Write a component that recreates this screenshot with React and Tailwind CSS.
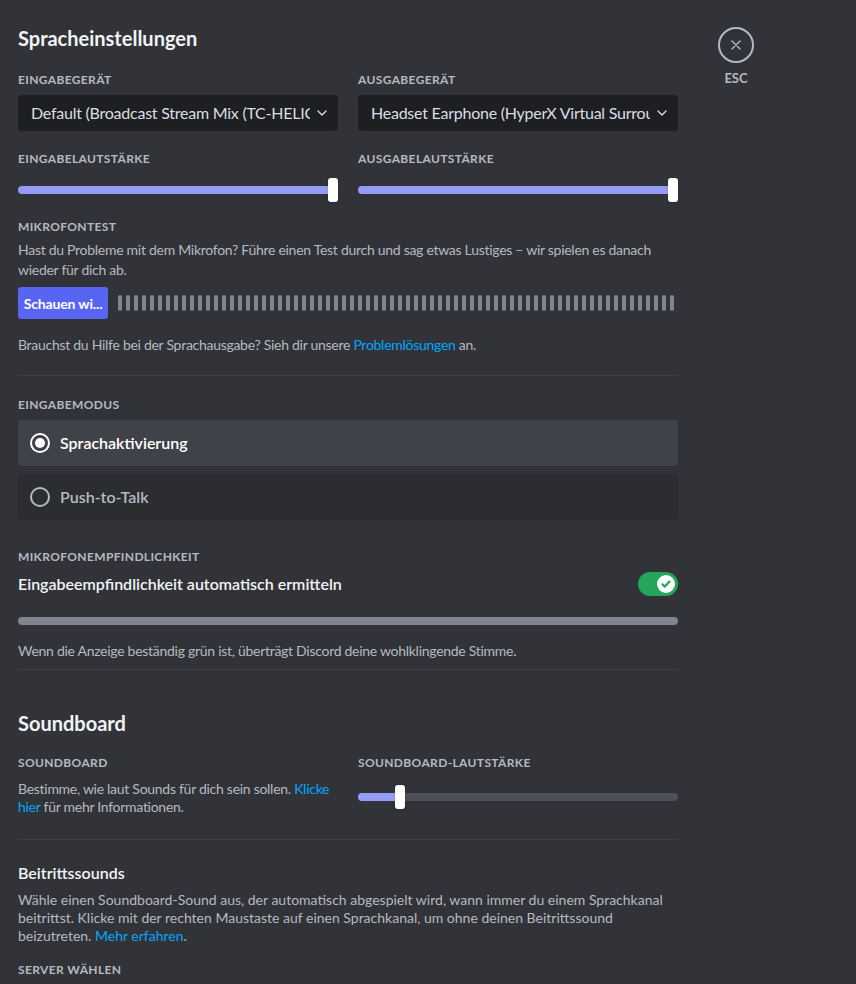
import React from "react";

const font = { fontFamily: 'Lato, "Noto Sans", sans-serif' };

function Heading({ children, className = "" }) {
  return (
    <div className={`text-[12px] leading-4 font-bold uppercase tracking-[0.03em] text-[#b5bac1] ${className}`}>
      {children}
    </div>
  );
}

function Chevron() {
  return (
    <svg width="16" height="16" viewBox="0 0 24 24" fill="none" stroke="#dbdee1" strokeWidth="2" strokeLinecap="round" strokeLinejoin="round">
      <path d="M6 9l6 6 6-6" />
    </svg>
  );
}

function Select({ text }) {
  return (
    <div className="h-9 rounded bg-[#1e1f22] flex items-center pl-[13px] pr-2 gap-1">
      <span className="flex-1 min-w-0 whitespace-nowrap overflow-hidden text-[16px] tracking-[-0.015em] text-[#dbdee1]">{text}</span>
      <Chevron />
    </div>
  );
}

function Slider({ pct }) {
  return (
    <div className="relative h-6 flex items-center">
      <div className="w-full h-2 rounded-full bg-[#4e5058] overflow-hidden">
        <div className="h-full bg-[#949cf7]" style={{ width: `${pct}%` }} />
      </div>
      <div
        className="absolute top-0 h-6 w-[10px] rounded-[3px] bg-white shadow"
        style={{ left: `calc(${pct}% - ${pct >= 100 ? 10 : 5}px)` }}
      />
    </div>
  );
}

function Radio({ selected, label }) {
  return (
    <div className={`h-[46px] rounded flex items-center px-[10px] gap-2 ${selected ? "bg-[#404249]" : "bg-[#2b2d31]"}`}>
      {selected ? (
        <svg width="24" height="24" viewBox="0 0 24 24">
          <circle cx="12" cy="12" r="9" fill="none" stroke="#fff" strokeWidth="2" />
          <circle cx="12" cy="12" r="5" fill="#fff" />
        </svg>
      ) : (
        <svg width="24" height="24" viewBox="0 0 24 24">
          <circle cx="12" cy="12" r="9" fill="none" stroke="#b5bac1" strokeWidth="2" />
        </svg>
      )}
      <span className={`text-[16px] font-semibold ${selected ? "text-white" : "text-[#b5bac1]"}`}>{label}</span>
    </div>
  );
}

export default function App() {
  const bars = Array.from({ length: 70 });
  return (
    <div className="w-[856px] h-[984px] overflow-hidden bg-[#313338] flex" style={font}>
      <div className="w-[660px] ml-[18px] pt-[26px]">
        <h1 className="text-[20px] leading-6 font-bold text-[#f2f3f5]">Spracheinstellungen</h1>

        <div className="grid grid-cols-2 gap-x-5 mt-[22px]">
          <div>
            <Heading>Eingabegerät</Heading>
            <div className="mt-[7px]"><Select text="Default (Broadcast Stream Mix (TC-HELICON GoXLR))" /></div>
          </div>
          <div>
            <Heading>Ausgabegerät</Heading>
            <div className="mt-[7px]"><Select text="Headset Earphone (HyperX Virtual Surround Sound)" /></div>
          </div>
          <div className="mt-[20px]">
            <Heading>Eingabelautstärke</Heading>
            <div className="mt-[11px]"><Slider pct={100} /></div>
          </div>
          <div className="mt-[20px]">
            <Heading>Ausgabelautstärke</Heading>
            <div className="mt-[11px]"><Slider pct={100} /></div>
          </div>
        </div>

        <Heading className="mt-[17px]">Mikrofontest</Heading>
        <p className="mt-[5px] text-[14px] leading-5 tracking-[-0.02em] text-[#b5bac1]">
          Hast du Probleme mit dem Mikrofon? Führe einen Test durch und sag etwas Lustiges – wir spielen es danach wieder für dich ab.
        </p>
        <div className="mt-[7px] flex items-center gap-[10px]">
          <button className="h-8 w-[90px] rounded-[3px] bg-[#5865f2] text-white text-[14px] tracking-[-0.01em] font-bold px-1 whitespace-nowrap overflow-hidden">
            Schauen wi...
          </button>
          <div className="flex-1 flex justify-between items-center pr-[4px]">
            {bars.map((_, i) => (
              <div key={i} className="w-1 h-4 rounded-full bg-[#80848e]" />
            ))}
          </div>
        </div>
        <p className="mt-[16px] text-[14px] leading-5 tracking-[-0.02em] text-[#b5bac1]">
          Brauchst du Hilfe bei der Sprachausgabe? Sieh dir unsere <span className="text-[#00a8fc]">Problemlösungen</span> an.
        </p>
        <div className="mt-[20px] h-px bg-[#3f4147]" />

        <Heading className="mt-[21px]">Eingabemodus</Heading>
        <div className="mt-[7px] flex flex-col gap-2">
          <Radio selected label="Sprachaktivierung" />
          <Radio label="Push-to-Talk" />
        </div>

        <Heading className="mt-[29px]">Mikrofonempfindlichkeit</Heading>
        <div className="mt-[7px] flex items-center justify-between">
          <span className="text-[16px] font-semibold text-[#f2f3f5]">Eingabeempfindlichkeit automatisch ermitteln</span>
          <div className="w-10 h-6 rounded-full bg-[#23a55a] flex items-center justify-end pr-[3px]">
            <div className="w-[18px] h-[18px] rounded-full bg-white flex items-center justify-center">
              <svg width="12" height="12" viewBox="0 0 12 12" fill="none" stroke="#23a55a" strokeWidth="2.2" strokeLinecap="round" strokeLinejoin="round">
                <path d="M2.5 6.3l2.3 2.3L9.5 3.6" />
              </svg>
            </div>
          </div>
        </div>
        <div className="mt-[21px] h-2 rounded-full bg-[#80848e]" />
        <p className="mt-[16px] text-[14px] leading-5 tracking-[-0.02em] text-[#b5bac1]">
          Wenn die Anzeige beständig grün ist, überträgt Discord deine wohlklingende Stimme.
        </p>
        <div className="mt-[8px] h-px bg-[#3f4147]" />

        <h2 className="mt-[41px] text-[20px] leading-6 font-bold text-[#f2f3f5]">Soundboard</h2>
        <div className="grid grid-cols-2 gap-x-5 mt-[20px]">
          <div>
            <Heading>Soundboard</Heading>
            <p className="mt-[9px] text-[14px] leading-[18px] tracking-[-0.02em] text-[#b5bac1]">
              Bestimme, wie laut Sounds für dich sein sollen. <span className="text-[#00a8fc]">Klicke hier</span> für mehr Informationen.
            </p>
          </div>
          <div>
            <Heading>Soundboard-Lautstärke</Heading>
            <div className="mt-[14px]"><Slider pct={13} /></div>
          </div>
        </div>
        <div className="mt-[23px] h-px bg-[#3f4147]" />

        <h3 className="mt-[23px] text-[16px] leading-5 font-semibold text-[#f2f3f5]">Beitrittssounds</h3>
        <p className="mt-[8px] text-[14px] leading-[18px] text-[#b5bac1]">
          Wähle einen Soundboard-Sound aus, der automatisch abgespielt wird, wann immer du einem Sprachkanal beitrittst. Klicke mit der rechten Maustaste auf einen Sprachkanal, um ohne deinen Beitrittssound beizutreten. <span className="text-[#00a8fc]">Mehr erfahren</span>.
        </p>
        <Heading className="mt-[17px]">Server wählen</Heading>
      </div>

      <div className="ml-[40px] pt-[27px] flex flex-col items-center w-9">
        <div className="w-9 h-9 rounded-full border-2 border-[#b5bac1] flex items-center justify-center">
          <svg width="16" height="16" viewBox="0 0 24 24" fill="none" stroke="#b5bac1" strokeWidth="2" strokeLinecap="round">
            <path d="M6 6l12 12M18 6L6 18" />
          </svg>
        </div>
        <div className="mt-[6px] text-[13px] font-bold text-[#b5bac1]">ESC</div>
      </div>
    </div>
  );
}
